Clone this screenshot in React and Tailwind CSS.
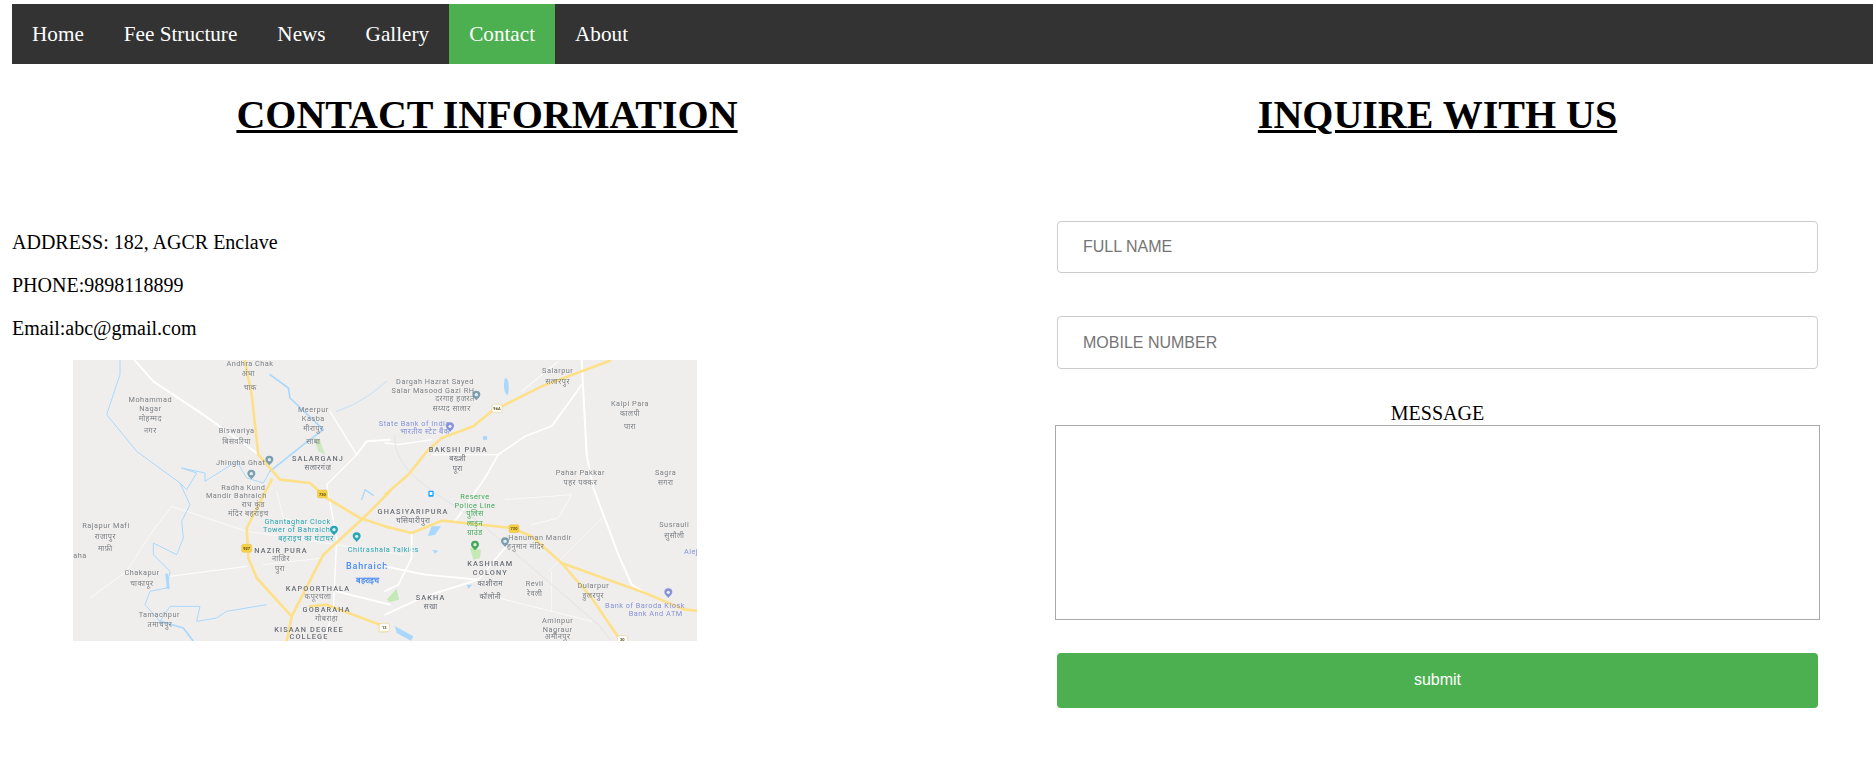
import React from "react";

const serif = "font-['Liberation_Serif','Times_New_Roman',serif]";
const arial = "font-['Liberation_Sans',Arial,sans-serif]";

const GREY = "#7d8186", DARK = "#6b7078", TEAL = "#2aa5b3", GREEN = "#43a85a", PURPLE = "#8592d8", BLUE = "#4c8df5";

const leftLabels = [
  ["Andhra Chak", 540, 25], ["अंधा", 535, 55], ["चाक", 541, 95],
  ["Mohammad", 241, 131], ["Nagar", 241, 158], ["मोहम्मद", 241, 190], ["नगर", 241, 225],
  ["Biswariya", 500, 226], ["बिसवरिया", 500, 257],
  ["Meerpur", 730, 161], ["Kasba", 730, 188], ["मीरापुर", 730, 220], ["साबा", 730, 258],
  ["SALARGANJ", 744, 309, DARK, 500], ["सलारगंज", 744, 336, DARK],
  ["Jhingha Ghat", 512, 320], ["Radha Kund", 520, 395], ["Mandir Bahraich", 499, 420],
  ["राध कुंड", 550, 447], ["मंदिर बहराइच", 535, 475],
  ["Ghantaghar Clock", 683, 498, TEAL], ["Tower of Bahraich", 680, 523, TEAL], ["बहराइच का घंटाघर", 708, 550, TEAL],
  ["Chitrashala Talkies", 940, 583, TEAL],
  ["NAZIR PURA", 633, 584, DARK, 500], ["नाजिर", 633, 610], ["पुरा", 630, 640],
  ["Rajapur Mafi", 108, 510], ["राजापुर", 106, 543], ["माफ़ी", 106, 578], ["aha", 30, 600],
  ["Chakapur", 216, 652], ["चाकापूर", 216, 683], ["Tamachpur", 268, 776], ["तमाचपुर", 270, 808],
  ["KAPOORTHALA", 744, 698, DARK, 500], ["कपूरथला", 744, 724],
  ["GOBARAHA", 770, 762, DARK, 500], ["गोबराहा", 770, 788],
  ["KISAAN DEGREE", 717, 822, DARK, 500], ["COLLEGE", 717, 844, DARK, 500],
];

const rightLabels = [
  ["Salarpur", 518, 46], ["सलारपुर", 518, 78],
  ["Dargah Hazrat Sayed", 150, 79], ["Salar Masood Gazi RH", 144, 104], ["दरगाह हजरत", 210, 130], ["सय्यद सालार", 200, 160],
  ["Kalpi Para", 735, 143], ["कालपी", 735, 173], ["पारा", 735, 212],
  ["State Bank of India", 88, 203, PURPLE], ["भारतीय स्टेट बैंक", 120, 228, PURPLE],
  ["BAKSHI PURA", 220, 282, DARK, 500], ["बख्शी", 218, 308, DARK], ["पूरा", 218, 338, DARK],
  ["Pahar Pakkar", 586, 351], ["पहर पक्कर", 586, 382], ["Sagra", 842, 350], ["सगरा", 842, 380],
  ["Reserve", 270, 424, GREEN], ["Police Line", 270, 449, GREEN], ["पुलिस", 270, 475, GREEN], ["लाइन", 270, 503, GREEN], ["ग्राउंड", 270, 532, GREEN],
  ["GHASIYARIPURA", 84, 469, DARK, 500], ["घसियारीपुरा", 85, 495, DARK],
  ["Hanuman Mandir", 465, 546], ["हनुमान मंदिर", 422, 572],
  ["KASHIRAM", 316, 623, DARK, 500], ["COLONY", 316, 650, DARK, 500], ["काशीराम", 316, 685, DARK], ["कॉलोनी", 316, 722, DARK],
  ["Revli", 449, 683], ["रेवली", 449, 713], ["SAKHA", 137, 725, DARK, 500], ["सखा", 137, 752, DARK],
  ["Dularpur", 625, 689], ["डुलरपुर", 625, 720], ["Susrauli", 868, 508], ["सुसौली", 868, 540], ["Alej", 918, 587, PURPLE],
  ["Bank of Baroda Kiosk", 780, 750, PURPLE], ["Bank And ATM", 812, 775, PURPLE],
  ["Aminpur", 518, 794], ["Nagraur", 518, 821], ["अमीनपुर", 518, 844],
];

const Labels = ({ items }) =>
  items.map(([t, x, y, c = GREY, w = 400], i) => (
    <text key={i} x={x} y={y} textAnchor="middle" fill={c} fontWeight={w} fontSize="22"
      letterSpacing={/^[A-Z ]+$/.test(t) ? 3.4 : 1.5} fontFamily="Roboto, 'Noto Sans', sans-serif">{t}</text>
  ));

const Pin = ({ x, y, c }) => (
  <g>
    <path d={`M${x - 12} ${y}a12 12 0 1 1 24 0c0 7-8 11-12 17c-4-6-12-10-12-17z`} fill={c} />
    <circle cx={x} cy={y} r="5" fill="#fff" opacity=".8" />
  </g>
);

const Shield = ({ x, y, t, c = "#f7d046" }) => (
  <g>
    <rect x={x - 15} y={y - 12} width="30" height="24" rx="5" fill={c} stroke="#d9b53a" />
    <text x={x} y={y + 5} textAnchor="middle" fontSize="12" fontWeight="700" fill="#5a4a10" fontFamily="Roboto, sans-serif">{t}</text>
  </g>
);

const Road = ({ d, w = 4, c = "#fff" }) => <path d={d} fill="none" stroke={c} strokeWidth={w} strokeLinecap="round" strokeLinejoin="round" />;
const Water = ({ d, w = 3 }) => <path d={d} fill="none" stroke="#a9d8fc" strokeWidth={w} strokeLinecap="round" strokeLinejoin="round" />;
const Hw = ({ d }) => <path d={d} fill="none" stroke="#fde08a" strokeWidth="8" strokeLinecap="round" strokeLinejoin="round" />;

function MapPicture() {
  return (
    <svg width="624" height="281" viewBox="0 0 624 281" className="block blur-[0.5px]" role="img" aria-label="Map of Bahraich">
      <rect width="624" height="281" fill="#efeeed" />
      <g transform="translate(-3 -2) scale(0.33333)">
        <Road d="M195 8L250 70L400 170L560 285" w={6} />
        <Road d="M305 445L530 520L800 560L1000 590" w={2} />
        <Road d="M305 445L240 530L170 640L60 720" w={2} />
        <Road d="M300 655L530 625" w={3} />
        <Road d="M780 160L860 290L770 380L800 540L790 760L760 850" w={4} />
        <Road d="M860 290L890 250L960 245" w={6} />
        <Road d="M620 400L640 480L780 520M580 620L760 600" w={2} />
        <Road d="M800 700L960 740" w={5} />
        <Water d="M150 8L150 50L110 170L200 280L330 375L360 440L335 490L340 540L320 590L250 555L250 590L300 640L290 690L240 700L225 740L270 790L300 745L390 745L380 790L440 780L470 760L590 740" />
        <Water d="M270 790L340 810L370 850" w={5} />
        <Water d="M335 330L380 345L350 395L330 375M335 330L405 345L405 370L500 310L530 360L580 375L600 340" />
        <Water d="M290 650L295 690" w={8} />
        <Water d="M600 340L700 260L760 215L660 120L655 90L600 50" w={5} />
        <Water d="M800 160L850 140L900 110L950 70" w={2} />
        <Water d="M875 425L885 395L910 412" w={4} />
        <path d="M730 240L750 245L765 290L745 280z" fill="#cfe8c0" />
        <Hw d="M525 8L545 110L565 290L630 365L720 375L770 420L870 480L960 510" />
        <Hw d="M605 365L530 510L535 600L560 660L665 775L650 850" />
        <Hw d="M665 775L760 590L880 480L960 400" />
        <Hw d="M720 745L770 740L850 770L930 800" />
        <Shield x={757} y={408} t="730" />
        <Shield x={530} y={571} t="927" />
        <Shield x={940} y={810} t="13" c="#fff" />
        <Pin x={598} y={305} c="#7c9fb0" />
        <Pin x={544} y={347} c="#7c9fb0" />
        <Pin x={792} y={515} c={TEAL} />
        <Pin x={860} y={535} c={TEAL} />
        <Labels items={leftLabels} />
        <text x="828" y="634" fill={BLUE} fontSize="27" fontWeight="500" letterSpacing="2.5" fontFamily="Roboto, sans-serif">Bahraich</text>
        <text x="893" y="674" fill={BLUE} fontSize="24" fontWeight="700" textAnchor="middle" fontFamily="Roboto, sans-serif">बहराइच</text>
      </g>
      <g transform="translate(312 -2) scale(0.33333)">
        <Road d="M340 290L420 235L500 205L540 150L590 80" w={5} />
        <Road d="M590 8L605 290L625 390L700 590L740 680L790 710" w={6} />
        <Road d="M340 290L300 360L210 490" w={5} />
        <Road d="M0 255L40 260L140 245M140 290L340 290" w={4} />
        <Road d="M410 100L520 10" w={3} />
        <Road d="M80 530L80 600L40 680L0 700M0 625L120 650L280 665L360 570" w={5} />
        <Road d="M0 770L120 715L280 665" w={5} />
        <Road d="M360 425L560 410L520 480L440 500M490 640L610 520L650 480" w={2} />
        <Road d="M340 720L500 760L620 790M500 640L500 760" w={2} />
        <path d="M30 230C20 340 160 410 280 490L640 800L680 850" fill="none" stroke="#dcdcdc" strokeWidth="2" />
        <Hw d="M0 410L70 350L130 275L170 240L265 205L320 160L470 85L675 8" />
        <Hw d="M0 505L80 525L170 488L380 510L440 535L530 615L620 720L705 845" />
        <Hw d="M530 615L780 705L900 755L936 758" />
        <path d="M5 725L35 692L42 725L15 732zM255 570L288 575L285 600L265 605z" fill="#c5e8b7" />
        <path d="M360 60C375 60 372 100 368 112C355 105 355 75 360 60zM293 240a7 7 0 1 0 14 0a7 7 0 1 0-14 0zM140 505L168 505L150 530L128 535zM142 575L160 578L150 587zM245 680L262 680L250 692zM30 805L85 835L78 848L35 825z" fill="#a9d8fc" />
        <rect x="130" y="398" width="16" height="18" rx="3" fill="#1aa7ff" />
        <rect x="134" y="402" width="8" height="9" fill="#fff" />
        <Shield x={336} y={151} t="96A" c="#fff" />
        <Shield x={387} y={512} t="730" />
        <Shield x={712} y={845} t="30" c="#fff" />
        <Shield x={-2} y={808} t="13" c="#fff" />
        <Pin x={274} y={110} c="#7c9fb0" />
        <Pin x={195} y={205} c={PURPLE} />
        <Pin x={270} y={560} c={GREEN} />
        <Pin x={360} y={550} c="#7c9fb0" />
        <Pin x={850} y={703} c={PURPLE} />
        <Labels items={rightLabels} />
      </g>
    </svg>
  );
}

const navItems = ["Home", "Fee Structure", "News", "Gallery", "Contact", "About"];

export default function App() {
  return (
    <div className={`${serif} min-h-[778px] overflow-hidden bg-white pt-1 pl-3 text-[20px] leading-[23px] text-black`}>
      <nav className="flex h-[60px] bg-[#333333] text-[21.2px]">
        {navItems.map((item) => (
          <a key={item} href="#" className={`flex items-center px-5 text-white ${item === "Contact" ? "bg-[#4caf50]" : ""}`}>
            {item}
          </a>
        ))}
      </nav>
      <div className="flex">
        <section className="w-[950px] shrink-0">
          <h1 className="mt-[28px] text-center text-[40px] leading-[46px] font-bold underline decoration-[3px]">CONTACT INFORMATION</h1>
          <div className="mt-[93px] flex flex-col gap-5">
            <p>ADDRESS: 182, AGCR Enclave</p>
            <p>PHONE:9898118899</p>
            <p>Email:abc@gmail.com</p>
          </div>
          <div className="mt-[20px] ml-[61px]">
            <MapPicture />
          </div>
        </section>
        <section className="ml-[95px] w-[761px] shrink-0">
          <h1 className="mt-[28px] text-center text-[40px] leading-[46px] font-bold underline decoration-[3px]">INQUIRE WITH US</h1>
          <form className="mt-[83px] flex flex-col items-center" onSubmit={(e) => e.preventDefault()}>
            <input placeholder="FULL NAME" className={`${arial} h-[52px] w-[761px] rounded border border-[#cccccc] px-[25px] text-base placeholder:text-[#757575]`} />
            <input placeholder="MOBILE NUMBER" className={`${arial} mt-[43px] h-[53px] w-[761px] rounded border border-[#cccccc] px-[25px] text-base placeholder:text-[#757575]`} />
            <label className="mt-[33px] block text-center">MESSAGE</label>
            <textarea className="h-[195px] w-[765px] shrink-0 resize-none border border-[#a9a9a9]" />
            <button className={`${arial} mt-[33px] h-[55px] w-[761px] rounded bg-[#4caf50] pb-[2px] text-base text-white`}>submit</button>
          </form>
        </section>
      </div>
    </div>
  );
}
